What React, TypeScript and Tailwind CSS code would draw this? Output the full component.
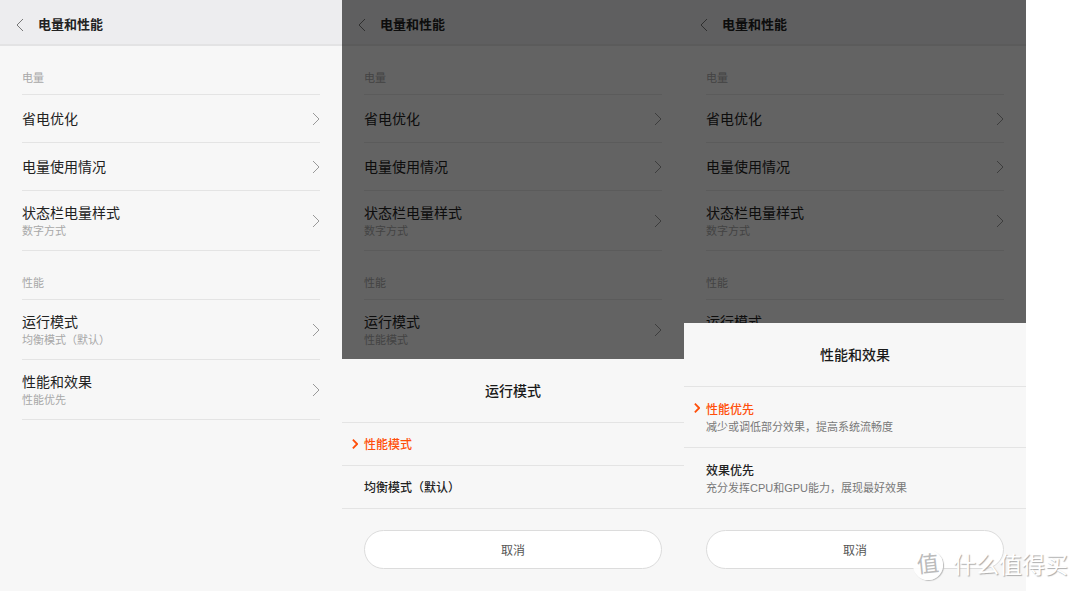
import React, { useState } from "react";

const batteryItems = [
  { title: "省电优化" },
  { title: "电量使用情况" },
  { title: "状态栏电量样式", value: "数字方式" },
];

const modeOptions = [{ title: "性能模式" }, { title: "均衡模式（默认）" }];

const effectOptions = [
  { title: "性能优先", desc: "减少或调低部分效果，提高系统流畅度" },
  { title: "效果优先", desc: "充分发挥CPU和GPU能力，展现最好效果" },
];

const Arrow = ({ className }: { className: string }) => (
  <svg className={className} viewBox="0 0 8 14" fill="none" stroke="currentColor" aria-hidden="true">
    <path d="M1 1l6 6-6 6" />
  </svg>
);

const Section = ({ label, items }: any) => (
  <section className="mx-[22px]">
    <h2 className="flex h-[49px] items-end border-b border-[#e4e4e4] pb-2 text-[11px] leading-4 text-[#a8a8a8]">
      {label}
    </h2>
    <ul>
      {items.map((item: any) => (
        <li key={item.title}>
          <button
            className={`flex w-full items-center justify-between border-b border-[#e4e4e4] text-left ${
              item.value ? "h-[60px]" : "h-12"
            }`}
          >
            <span>
              <span className="block text-sm leading-5 text-[#222]">{item.title}</span>
              {item.value && (
                <span className="block text-[11px] leading-4 text-[#a8a8a8]">{item.value}</span>
              )}
            </span>
            <Arrow className="h-[14px] w-2 text-[#999]" />
          </button>
        </li>
      ))}
    </ul>
  </section>
);

const Sheet = ({ title, options }: any) => {
  const [selected, setSelected] = useState(0);

  return (
    <div className="absolute inset-0 flex flex-col justify-end bg-black/60">
      <div role="dialog" aria-label={title} className="bg-[#f7f7f7]">
        <h2 className="flex h-16 items-center justify-center border-b border-[#e4e4e4] text-sm font-medium text-[#1a1a1a]">
          {title}
        </h2>
        {options.map((option: any, index: number) => (
          <button
            key={option.title}
            onClick={() => setSelected(index)}
            className={`flex w-full items-center border-b border-[#e4e4e4] pt-[2px] text-left ${
              option.desc ? "h-[61px]" : "h-[43px]"
            }`}
          >
            <span className="flex w-[22px] justify-center pl-[3px]">
              {selected === index && (
                <Arrow className={`h-[10px] w-[6px] stroke-[2.5] text-[#ff4f0a] ${option.desc ? "mb-5" : "mb-[2px]"}`} />
              )}
            </span>
            <span>
              <span
                className={`block text-xs leading-[17px] font-medium ${
                  selected === index ? "text-[#ff4f0a]" : "text-[#222]"
                }`}
              >
                {option.title}
              </span>
              {option.desc && (
                <span className="block text-[11px] leading-4 text-[#777]">{option.desc}</span>
              )}
            </span>
          </button>
        ))}
        <div className="px-[22px] pt-[21px] pb-[22px]">
          <button className="h-[39px] w-full rounded-full border border-[#dcdcdc] bg-white pt-[2px] text-xs text-[#555]">
            取消
          </button>
        </div>
      </div>
    </div>
  );
};

const Screen = ({ mode, children }: { mode: string; children?: React.ReactNode }) => (
  <div className="relative overflow-hidden bg-[#f7f7f7]">
    <header className="flex h-[46px] items-center border-b-2 border-[#e3e3e4] bg-[#ededef] pt-[5px] pl-4">
      <button aria-label="返回">
        <Arrow className="h-[14px] w-2 rotate-180 text-[#777]" />
      </button>
      <h1 className="ml-[14px] text-[13px] font-bold text-[#222]">电量和性能</h1>
    </header>
    <Section label="电量" items={batteryItems} />
    <Section
      label="性能"
      items={[
        { title: "运行模式", value: mode },
        { title: "性能和效果", value: "性能优先" },
      ]}
    />
    {children}
  </div>
);

const App = () => {
  return (
    <div className="relative min-h-screen bg-white font-['Liberation_Sans','Noto_Sans_CJK_SC',sans-serif]">
      <main className="mr-[5%] grid min-h-screen grid-cols-3">
        <Screen mode="均衡模式（默认）" />
        <Screen mode="性能模式">
          <Sheet title="运行模式" options={modeOptions} />
        </Screen>
        <Screen mode="性能模式">
          <Sheet title="性能和效果" options={effectOptions} />
        </Screen>
      </main>

      {/* Watermark */}
      <div className="absolute right-3 bottom-[10px] flex items-center gap-[10px]">
        <span className="flex size-[30px] -rotate-6 items-center justify-center rounded-full bg-white/90 text-[22px] leading-none text-[#bbb] shadow-[1px_1px_1px_#bbb]">
          值
        </span>
        <span className="text-[23px] leading-8 text-white [text-shadow:1px_1px_1px_#aaa]">什么值得买</span>
      </div>
    </div>
  );
};

export default App;
